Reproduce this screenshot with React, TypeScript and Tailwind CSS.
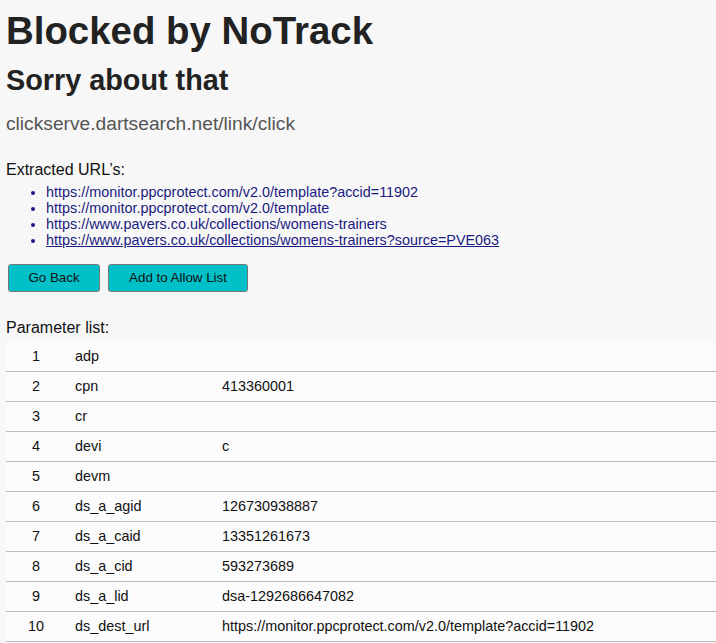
import React from 'react'

const urls = [
  'https://monitor.ppcprotect.com/v2.0/template?accid=11902',
  'https://monitor.ppcprotect.com/v2.0/template',
  'https://www.pavers.co.uk/collections/womens-trainers',
  'https://www.pavers.co.uk/collections/womens-trainers?source=PVE063',
]

const params: [string, string][] = [
  ['adp', ''],
  ['cpn', '413360001'],
  ['cr', ''],
  ['devi', 'c'],
  ['devm', ''],
  ['ds_a_agid', '126730938887'],
  ['ds_a_caid', '13351261673'],
  ['ds_a_cid', '593273689'],
  ['ds_a_lid', 'dsa-1292686647082'],
  ['ds_dest_url', 'https://monitor.ppcprotect.com/v2.0/template?accid=11902'],
]

export default function App() {
  return (
    <div className="min-h-screen bg-[#f7f7f7] pl-[6px] pt-[9px] font-['Liberation_Sans',Arial,sans-serif] leading-[normal] text-[#222] overflow-hidden">
      <h1 className="text-[38.4px] font-bold leading-[normal]">Blocked by NoTrack</h1>
      <h2 className="mt-[11.4px] text-[28.8px] font-bold leading-[normal]">Sorry about that</h2>
      <p className="mt-[16px] text-[19.2px] leading-[normal] text-[#555]">clickserve.dartsearch.net/link/click</p>

      <p className="mt-[25.5px] text-[16px] leading-[normal] text-[#111]">Extracted URL’s:</p>
      <ul className="mt-[5.3px] list-disc pl-[40px] text-[14.4px] leading-[normal] text-[#1a1a80]">
        {urls.map((u, i) => (
          <li key={u}>
            <a href="#" className={i === urls.length - 1 ? 'underline' : 'no-underline'}>
              {u}
            </a>
          </li>
        ))}
      </ul>

      <div className="mt-[15.8px] flex gap-[8px] pl-[2px]">
        <button className="h-[28px] w-[92px] rounded-[3px] border border-[#777] bg-[#00c0c8] text-[13.33px] leading-[normal] text-[#111]">
          Go Back
        </button>
        <button className="h-[28px] w-[140px] rounded-[3px] border border-[#777] bg-[#00c0c8] text-[13.33px] leading-[normal] text-[#111]">
          Add to Allow List
        </button>
      </div>

      <p className="mt-[26.6px] text-[16px] leading-[normal] text-[#111]">Parameter list:</p>
      <div className="mt-[5px] bg-[#fbfbfb] text-[14.4px] leading-[normal] text-[#111]">
        {params.map(([name, value], i) => (
          <div key={name} className="flex h-[30px] items-center border-b border-[#bbb]">
            <div className="w-[60px] text-center">{i + 1}</div>
            <div className="w-[156px] pl-[9px]">{name}</div>
            <div>{value}</div>
          </div>
        ))}
      </div>
    </div>
  )
}
